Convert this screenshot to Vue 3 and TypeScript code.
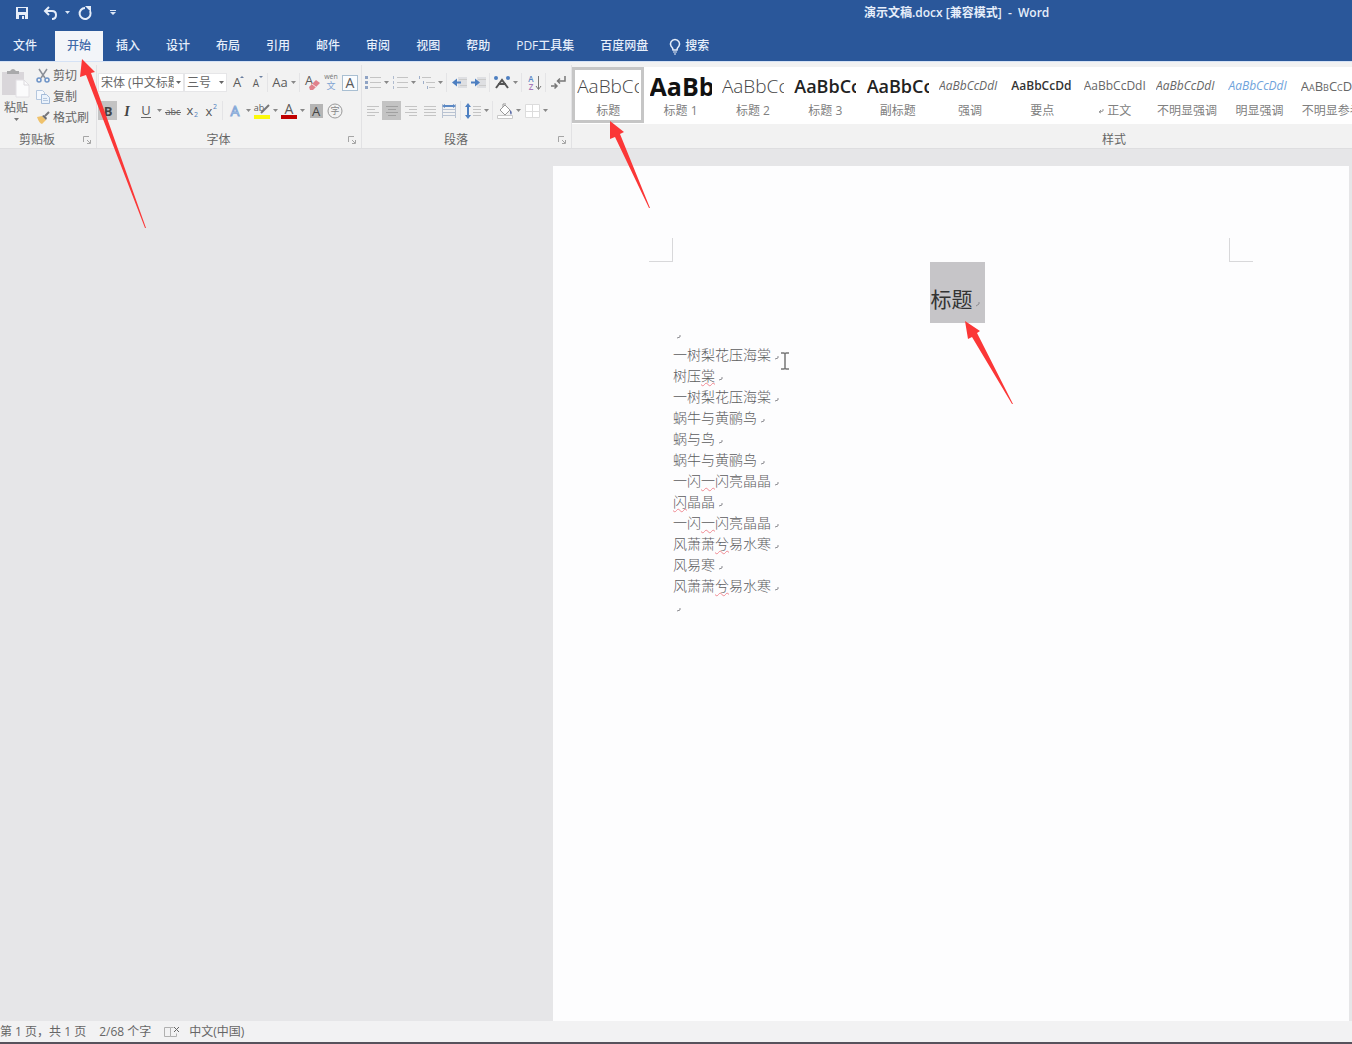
<script setup lang="ts">
interface Tool {
  kind: 'icon' | 'caret' | 'sep'
  label?: string
  art?: string
  on?: boolean
}

const icon = (label: string, art: string, on = false): Tool => ({ kind: 'icon', label, art, on })
const caret: Tool = { kind: 'caret' }
const sep: Tool = { kind: 'sep' }

const letter = (t: string, x: number, y: number, size: number, fill = '#5a5a5a', extra = '') =>
  `<text x="${x}" y="${y}" font-size="${size}" fill="${fill}" text-anchor="middle" ${extra}>${t}</text>`
const lines = (d: string, color = '#c4c4c4') => `<path d="${d}" stroke="${color}" fill="none"/>`

const tabs = ['插入', '设计', '布局', '引用', '邮件', '审阅', '视图', '帮助', 'PDF工具集', '百度网盘']

const fontTop: Tool[] = [
  icon('增大字号', letter('A', 9, 13, 13) + '<path d="M12 4l2-2 2 2z" fill="#6a7fa0"/>'),
  icon('减小字号', letter('A', 9, 13, 10) + '<path d="M12 2h4l-2 2z" fill="#6a7fa0"/>'),
  sep,
  icon('更改大小写', letter('Aa', 9, 13, 13)),
  caret,
  sep,
  icon('清除格式', letter('A', 6, 11, 13) + '<path d="M6 13l7-7 4 3-7 7h-3z" fill="#e0828c"/><path d="M9 10l4 3" stroke="#f6dfe1"/>'),
  icon('拼音指南', letter('wén', 9, 5, 7, '#777') + letter('文', 9, 15, 9, '#7fa3d3')),
  icon('字符边框', '<rect x="1.500" y="1.500" width="15" height="15" fill="#fafcfe" stroke="#a9bfd2"/>' + letter('A', 9, 14, 14)),
]

const fontBottom: Tool[] = [
  icon('加粗', letter('B', 9, 14, 13, '#444', 'font-weight="700"'), true),
  icon('倾斜', letter('I', 9, 14, 14, '#444', 'font-weight="700" font-style="italic" font-family="Liberation Serif, serif"')),
  icon('下划线', letter('U', 9, 13, 13) + lines('M4 15.500h10', '#666')),
  caret,
  icon('删除线', letter('abc', 9, 13, 9) + lines('M1 10.500h16', '#666')),
  icon('下标', letter('x', 7, 13, 13, '#555') + letter('2', 13, 15, 7, '#4f81bd')),
  icon('上标', letter('x', 7, 14, 13, '#555') + letter('2', 13, 7, 7, '#4f81bd')),
  sep,
  icon('文本效果', letter('A', 9, 14, 14, '#f4f8fd', 'stroke="#86a9d8" stroke-width="1"')),
  caret,
  icon('突出显示', letter('ab', 6, 9, 9) + '<path d="M8 11l8-8" stroke="#777" stroke-width="2"/><rect x="1" y="13" width="16" height="4" fill="#fbf90c"/>'),
  caret,
  icon('字体颜色', letter('A', 9, 12, 14) + '<rect x="1" y="13" width="16" height="4" fill="#c00000"/>'),
  caret,
  icon('字符底纹', '<rect x="3" y="2" width="13" height="14" fill="#b5b5b5"/>' + letter('A', 9, 14, 13, '#444')),
  icon('带圈字符', '<circle cx="9" cy="9" r="7" fill="none" stroke="#999"/>' + letter('字', 9, 12, 9, '#888')),
]

const paraTop: Tool[] = [
  icon('项目符号', lines('M6 3.500h11M6 8.500h11M6 13.500h11') + '<path d="M1 2h3v3h-3zM1 7h3v3h-3zM1 12h3v3h-3z" fill="#8fa3c4"/>'),
  caret,
  icon('编号', lines('M6 3.500h11M6 8.500h11M6 13.500h11') + lines('M2.500 2v3M2.500 7v3M2.500 12v3', '#b0bccf')),
  caret,
  icon('多级列表', lines('M4 3.500h9M8 8.500h9M11 13.500h6') + lines('M1.500 2v3M5.500 7v3M9.500 12v3', '#9fafc9')),
  caret,
  sep,
  icon('减少缩进', '<path d="M8 3h9v11h-9z" fill="#dedfe2"/>' + lines('M9 5.500h8M10 11.500h7', '#cbcbcb') + '<path d="M2 8.500l5-4v3h4v2h-4v3z" fill="#4d7fc1"/>'),
  icon('增加缩进', '<path d="M8 3h9v11h-9z" fill="#dedfe2"/>' + lines('M9 5.500h8M10 11.500h7', '#cbcbcb') + '<path d="M11 8.500l-5-4v3h-4v2h4v3z" fill="#4d7fc1"/>'),
  sep,
  icon('中文版式', '<path d="M3 14l6-8 6 8M5 10h8" stroke="#555" stroke-width="2" fill="none"/><circle cx="3" cy="4" r="2" fill="#4d7fc1"/><circle cx="15" cy="4" r="2" fill="#4d7fc1"/>'),
  caret,
  sep,
  icon('排序', letter('A', 6, 8, 8, '#5a86c4', 'font-weight="600"') + letter('Z', 6, 16, 8, '#a678b8', 'font-weight="600"') + '<path d="M13.500 2v13M11 12l2.500 3.500 2.500-3.500" stroke="#777" fill="none"/>'),
  sep,
  icon('显示编辑标记', '<path d="M16 2v5h-7M11 4.500l-2.500 2.500 2.500 2.500M2 12h6M5.500 9.500l2.500 2.500-2.500 2.500" stroke="#777" stroke-width="1.500" fill="none"/>'),
]

const paraBottom: Tool[] = [
  icon('左对齐', lines('M3 4.500h12M3 7.500h8M3 10.500h12M3 13.500h8')),
  icon('居中', lines('M3 4.500h12M5 7.500h8M3 10.500h12M5 13.500h8', '#a0a0a0'), true),
  icon('右对齐', lines('M3 4.500h12M7 7.500h8M3 10.500h12M7 13.500h8')),
  icon('两端对齐', lines('M3 4.500h12M3 7.500h12M3 10.500h12M3 13.500h12')),
  icon('分散对齐', lines('M3 7.500h12M3 10.500h12M3 13.500h12M2.500 2v14M15.500 2v14', '#b9c3d2') + '<path d="M2 4l3-2v1h8v-1l3 2-3 2v-1h-8v1z" fill="#5b88c4"/>'),
  sep,
  icon('行和段落间距', lines('M9 4.500h8M9 7.500h8M9 10.500h8M9 13.500h8') + '<path d="M4 1l3 4h-2v8h2l-3 4-3-4h2v-8h-2z" fill="#4d7fc1"/>'),
  caret,
  sep,
  icon('底纹', '<path d="M4 8l5-5 5 5-5 5zM7 5v-3h3" stroke="#999" fill="#fff"/><path d="M14 8q3 2 1 5l-1-2z" fill="#5d6ea8"/><path d="M1.500 13.500h15v3h-15z" fill="#fff" stroke="#c9c9c9"/>'),
  caret,
  icon('边框', '<path d="M2.500 2.500h14v13h-14zM9.500 2.500v13M2.500 9.500h14" fill="#fff" stroke="#dcdcdc"/>'),
  caret,
]

const styles = [
  { name: '标题', text: 'AaBbCc', look: 'large light', on: true },
  { name: '标题 1', text: 'AaBbC', look: 'huge' },
  { name: '标题 2', text: 'AaBbCc', look: 'large light' },
  { name: '标题 3', text: 'AaBbCc', look: 'large strong' },
  { name: '副标题', text: 'AaBbCc', look: 'large strong' },
  { name: '强调', text: 'AaBbCcDdI', look: 'slant' },
  { name: '要点', text: 'AaBbCcDd', look: 'strong' },
  { name: '正文', text: 'AaBbCcDdI', look: '', mark: true },
  { name: '不明显强调', text: 'AaBbCcDdI', look: 'slant' },
  { name: '明显强调', text: 'AaBbCcDdI', look: 'slant accent' },
  { name: '不明显参考', text: 'AaBbCcDdE', look: 'caps' },
]

/* Each line is split as [before, misspelt, after]. */
const body: [string, string, string][] = [
  ['', '', ''],
  ['一树梨花压海棠', '', ''],
  ['树压', '棠', ''],
  ['一树梨花压海棠', '', ''],
  ['蜗牛与黄鹂鸟', '', ''],
  ['蜗与鸟', '', ''],
  ['蜗牛与黄鹂鸟', '', ''],
  ['一闪', '一', '闪亮晶晶'],
  ['', '闪', '晶晶'],
  ['一闪', '一', '闪亮晶晶'],
  ['风萧萧', '兮', '易水寒'],
  ['风易寒', '', ''],
  ['风萧萧', '兮', '易水寒'],
  ['', '', ''],
]
</script>

<template>
  <div class="app">
    <header class="titlebar">
      <div class="quick">
        <button aria-label="保存">
          <svg width="14" height="14" viewBox="0 0 14 14"><path d="M1 1h12v12H1z" fill="#e6eefa" /><path d="M3 2h8v4H3z" fill="#2a579a" /><path d="M4 9h6v4H4z" fill="#2a579a" /><path d="M7 10h2v3H7z" fill="#e6eefa" /></svg>
        </button>
        <button aria-label="撤消">
          <svg width="16" height="16" viewBox="0 0 16 16"><path d="M6 2L2 6l4 4M2 6h7q4 0 4 4t-4 4" fill="none" stroke="#e6eefa" stroke-width="2" /></svg>
        </button>
        <button class="slim" aria-label="撤消列表">
          <svg width="5" height="3" viewBox="0 0 5 3"><path d="M0 0h5L2.500 3z" fill="#dbe6f6" /></svg>
        </button>
        <button class="redo" aria-label="重复">
          <svg width="16" height="16" viewBox="0 0 16 16"><path d="M8 3A5.500 5.500 0 1 0 13 6" fill="none" stroke="#e6eefa" stroke-width="2" /><path d="M8 1h6v6z" fill="#e6eefa" /></svg>
        </button>
        <button aria-label="自定义快速访问工具栏">
          <svg width="6" height="6" viewBox="0 0 6 6"><path d="M0 0h6v1H0zM0 2h6L3 5z" fill="#dbe6f6" /></svg>
        </button>
      </div>
      <h1>演示文稿.docx [兼容模式]&nbsp; - &nbsp;Word</h1>
    </header>

    <nav class="tabs">
      <button class="file">文件</button>
      <button class="active">开始</button>
      <button v-for="t in tabs" :key="t">{{ t }}</button>
      <button class="search">
        <svg width="12" height="17" viewBox="0 0 12 17"><path d="M4 12q0-2-2-4a4.500 4.500 0 1 1 8 0q-2 2-2 4z" fill="none" stroke="#e6eefa" stroke-width="1.500" /><path d="M4 14h4M5 16h2" stroke="#e6eefa" /></svg>
        搜索
      </button>
    </nav>

    <section class="ribbon">
      <div class="group clipboard">
        <div class="clip-tools">
          <button class="paste">
            <svg width="30" height="30" viewBox="0 0 30 30"><path d="M1 4h22v23H1z" fill="#d9d6da" /><path d="M6 6V3h3q3-4 6 0h3v3z" fill="#a9a9ab" /><path d="M15 12h8l5 5v12H15z" fill="#fbfbfc" stroke="#e2e0e4" /><path d="M23 12v5h5" fill="none" stroke="#dcdade" /></svg>
            <span>粘贴</span>
            <svg width="5" height="3" viewBox="0 0 5 3"><path d="M0 0h5L2.500 3z" fill="#777" /></svg>
          </button>
          <div class="clip-list">
            <button>
              <svg width="14" height="14" viewBox="0 0 14 14"><path d="M3 0l6 9M11 0L5 9" stroke="#8a8f98" stroke-width="1.500" /><circle cx="3" cy="11" r="2" fill="none" stroke="#6d93c7" stroke-width="1.500" /><circle cx="11" cy="11" r="2" fill="none" stroke="#6d93c7" stroke-width="1.500" /></svg>
              剪切
            </button>
            <button>
              <svg width="14" height="14" viewBox="0 0 14 14"><path d="M.5.5h6l2 2v7h-8z" fill="#f4f8fd" stroke="#b4c7de" /><path d="M5.500 4.500h5l3 3v6h-8z" fill="#eaf2fb" stroke="#a4bbd8" /><path d="M7 8.500h4M7 10.500h5" stroke="#b4c7de" /></svg>
              复制
            </button>
            <button>
              <svg width="14" height="14" viewBox="0 0 14 14"><path d="M1 6l5-1 4 4-4 4q-3-1-5-7z" fill="#efc26c" /><path d="M6 5l2-1 3 3-1 2z" fill="#6c6c70" /><path d="M9 5l4-4" stroke="#77777b" stroke-width="2" /></svg>
              格式刷
            </button>
          </div>
        </div>
        <footer>
          <span>剪贴板</span>
          <button class="launch" aria-label="剪贴板选项"><svg width="8" height="8" viewBox="0 0 8 8"><path d="M.5 6V.5H6M4 4l3 3M7.500 4v3.500H4" fill="none" stroke="#a5a5a5" /></svg></button>
        </footer>
      </div>

      <div class="group font">
        <div class="row">
          <label class="combo family">
            <select aria-label="字体"><option>宋体 (中文标题)</option></select>
            <svg width="5" height="3" viewBox="0 0 5 3"><path d="M0 0h5L2.500 3z" fill="#666" /></svg>
          </label>
          <label class="combo size">
            <select aria-label="字号"><option>三号</option></select>
            <svg width="5" height="3" viewBox="0 0 5 3"><path d="M0 0h5L2.500 3z" fill="#666" /></svg>
          </label>
          <template v-for="(t, i) in fontTop" :key="i">
            <i v-if="t.kind === 'sep'" class="sep"></i>
            <button v-else-if="t.kind === 'caret'" class="caret" aria-label="更多"><svg width="5" height="3" viewBox="0 0 5 3"><path d="M0 0h5L2.500 3z" fill="#888" /></svg></button>
            <button v-else class="tool" :class="{ on: t.on }" :aria-label="t.label"><svg width="18" height="18" viewBox="0 0 18 18" v-html="t.art"></svg></button>
          </template>
        </div>
        <div class="row">
          <template v-for="(t, i) in fontBottom" :key="i">
            <i v-if="t.kind === 'sep'" class="sep"></i>
            <button v-else-if="t.kind === 'caret'" class="caret" aria-label="更多"><svg width="5" height="3" viewBox="0 0 5 3"><path d="M0 0h5L2.500 3z" fill="#888" /></svg></button>
            <button v-else class="tool" :class="{ on: t.on }" :aria-label="t.label"><svg width="18" height="18" viewBox="0 0 18 18" v-html="t.art"></svg></button>
          </template>
        </div>
        <footer>
          <span>字体</span>
          <button class="launch" aria-label="字体选项"><svg width="8" height="8" viewBox="0 0 8 8"><path d="M.5 6V.5H6M4 4l3 3M7.500 4v3.500H4" fill="none" stroke="#a5a5a5" /></svg></button>
        </footer>
      </div>

      <div class="group para">
        <div v-for="(row, r) in [paraTop, paraBottom]" :key="r" class="row">
          <template v-for="(t, i) in row" :key="i">
            <i v-if="t.kind === 'sep'" class="sep"></i>
            <button v-else-if="t.kind === 'caret'" class="caret" aria-label="更多"><svg width="5" height="3" viewBox="0 0 5 3"><path d="M0 0h5L2.500 3z" fill="#888" /></svg></button>
            <button v-else class="tool" :class="{ on: t.on }" :aria-label="t.label"><svg width="18" height="18" viewBox="0 0 18 18" v-html="t.art"></svg></button>
          </template>
        </div>
        <footer>
          <span>段落</span>
          <button class="launch" aria-label="段落选项"><svg width="8" height="8" viewBox="0 0 8 8"><path d="M.5 6V.5H6M4 4l3 3M7.500 4v3.500H4" fill="none" stroke="#a5a5a5" /></svg></button>
        </footer>
      </div>

      <div class="group gallery">
        <div class="cards">
          <button v-for="s in styles" :key="s.name" class="card" :class="{ on: s.on }">
            <span class="sample" :class="s.look">{{ s.text }}</span>
            <span class="name"><svg v-if="s.mark" width="6" height="5" viewBox="0 0 6 5"><path d="M5 0v2L1 3M3 1L1 3l2 1" fill="none" stroke="#999" /></svg>{{ s.name }}</span>
          </button>
        </div>
        <footer><span>样式</span></footer>
      </div>
    </section>

    <main class="workspace">
      <article class="page">
        <div class="corners"><i class="left"></i><i class="right"></i></div>
        <h2>
          <span>标题<svg width="5" height="5" viewBox="0 0 5 5"><path d="M4 0v2L1 4" fill="none" stroke="#8d8d92" /></svg></span>
        </h2>
        <div class="text">
          <p v-for="(l, i) in body" :key="i">{{ l[0] }}<u v-if="l[1]">{{ l[1] }}</u>{{ l[2] }}<svg width="4" height="4" viewBox="0 0 4 4"><path d="M4 0v2L1 3" fill="none" stroke="#8d8d92" /></svg></p>
        </div>
      </article>
    </main>

    <footer class="status">
      <span>第 1 页，共 1 页</span>
      <span>2/68 个字</span>
      <svg width="16" height="12" viewBox="0 0 16 12"><path d="M.5 1.500h6v9h-6zM6.500 1.500h3M6.500 10.500h6v-3" fill="none" stroke="#b0b0b0" /><path d="M10 1l5 5M15 1l-5 5" stroke="#666" /></svg>
      <span>中文(中国)</span>
    </footer>

    <svg class="overlay" width="1100" height="420" viewBox="0 0 1100 420" aria-hidden="true">
      <g fill="#fb3737">
        <path d="M82 59L80 77L86 75L145 228H146L91 73L95 72Z" />
        <path d="M610 121V139L615 137L649 208H650L620 134L624 132Z" />
        <path d="M965 321L968 339L972 337L1012 404H1013L977 333L980 331Z" />
      </g>
      <path d="M781 353h3l1 1 1-1h3M785 354v14M781 369h3l1-1 1 1h3" fill="none" stroke="#777" stroke-width="1.500" />
    </svg>
  </div>
</template>

<style>
body {
  margin: 0;
}
</style>

<style scoped>
.app {
  position: relative;
  display: flex;
  flex-direction: column;
  min-height: 100vh;
  overflow: hidden;
  background: #e6e6e8;
  color: #666;
  font-family: "Open Sans", "Noto Sans CJK SC", sans-serif;
  font-size: 12px;
  line-height: 16px;
}
.app * {
  box-sizing: border-box;
}
button {
  display: flex;
  align-items: center;
  justify-content: center;
  flex: none;
  margin: 0;
  padding: 0;
  border: 0;
  background: none;
  color: inherit;
  font: inherit;
  white-space: nowrap;
}
svg {
  display: block;
  flex: none;
  overflow: visible;
}

.titlebar {
  display: flex;
  align-items: center;
  height: 25px;
  background: #2a579a;
  color: #e6eefa;
}
.quick {
  display: flex;
  flex: none;
  width: 120px;
  padding-left: 12px;
}
.quick button {
  width: 20px;
  height: 20px;
}
.quick button:nth-child(2) {
  margin-left: 9px;
}
.quick .slim {
  width: 12px;
}
.quick .redo {
  margin: 0 8px 0 2px;
}
h1 {
  margin: 0 0 0 744px;
  font-size: 12px;
  font-weight: 600;
  white-space: nowrap;
}

.tabs {
  display: flex;
  align-items: flex-end;
  height: 36px;
  background: #2a579a;
  color: #e6eefa;
  font-weight: 500;
}
.tabs button {
  height: 30px;
  padding: 0 13px;
}
.tabs .file {
  margin-right: 5px;
}
.tabs .active {
  padding: 0 12px;
  background: #f3f5f9;
  color: #3f69a8;
}
.tabs .search {
  gap: 4px;
  padding: 0 8px;
}

.ribbon {
  display: flex;
  height: 88px;
  border-top: 1px solid #d5e2f5;
  border-bottom: 1px solid #dedee0;
  background: #f2f2f2;
}
.group {
  display: flex;
  flex: none;
  flex-direction: column;
  gap: 9px;
  margin-top: 3px;
  padding-top: 8px;
  border-right: 1px solid #e2e2e4;
}
.group footer {
  display: flex;
  align-items: center;
  height: 16px;
  margin-top: auto;
  padding-right: 4px;
}
.group footer span {
  flex: 1;
  padding-right: 8px;
  text-align: center;
}
.launch {
  width: 10px;
  height: 10px;
}
.row {
  display: flex;
  height: 19px;
}
.tool {
  width: 19px;
  height: 19px;
}
.on.tool {
  background: #c3c3c3;
}
.caret {
  width: 8px;
}
.sep {
  width: 1px;
  height: 19px;
  margin: 0 2px;
  background: #e4e4e6;
}

.clipboard {
  gap: 0;
  width: 97px;
  padding-top: 0;
}
.clip-tools {
  display: flex;
}
.paste {
  flex-direction: column;
  gap: 2px;
  width: 32px;
  height: 58px;
}
.clip-list {
  display: flex;
  flex-direction: column;
  padding-left: 4px;
}
.clip-list button {
  justify-content: flex-start;
  gap: 3px;
  height: 21px;
}

.font {
  width: 265px;
  padding-left: 1px;
}
.combo {
  position: relative;
  flex: none;
  height: 19px;
  border: 1px solid #e6e6e8;
  background: #fff;
}
.family {
  width: 86px;
}
.size {
  width: 43px;
}
.combo select {
  width: 100%;
  height: 17px;
  padding: 0 9px 0 2px;
  border: 0;
  appearance: none;
  background: none;
  color: #666;
  font: inherit;
}
.combo svg {
  position: absolute;
  top: 7px;
  right: 2px;
}

.para {
  width: 210px;
  padding-left: 1px;
}

.gallery {
  flex: 1;
  gap: 0;
  min-width: 0;
  padding-top: 2px;
  border-right: 0;
  overflow: hidden;
}
.cards {
  display: grid;
  grid-template-columns: repeat(11, 1fr);
  width: calc(100% + 16px);
  height: 57px;
  flex: none;
  background: #fff;
}
.card {
  flex-direction: column;
  justify-content: flex-start;
  min-width: 0;
  height: 56px;
  border: 3px solid transparent;
}
.card.on {
  border-color: #c6c6c6;
}
.sample {
  width: 62px;
  height: 32px;
  overflow: hidden;
  color: #666;
  line-height: 32px;
  text-align: left;
}
.name {
  display: flex;
  align-items: center;
  gap: 3px;
  height: 18px;
  color: #808080;
}
.large {
  font-size: 19px;
}
.light {
  color: #444;
  font-weight: 300;
}
.strong {
  color: #333;
  font-weight: 600;
}
.large.strong {
  color: #222;
  font-size: 18px;
}
.huge {
  color: #111;
  font-size: 25px;
  font-weight: 700;
}
.slant {
  font-style: italic;
}
.accent {
  color: #6fa3dc;
}
.caps {
  font-size: 13px;
  font-variant: small-caps;
}
.gallery footer span {
  padding: 0 0 0 308px;
}

.workspace {
  display: flex;
  flex: 1;
  padding: 17px 3px 0 553px;
}
.page {
  flex: 1;
  padding-top: 72px;
  background: #fdfdfe;
}
.corners {
  display: flex;
  justify-content: space-between;
  height: 24px;
  margin: 0 96px;
}
.corners i {
  width: 24px;
  border-bottom: 1px solid #d8d8da;
}
.corners .left {
  border-right: 1px solid #d8d8da;
}
.corners .right {
  border-left: 1px solid #d8d8da;
}
h2 {
  display: flex;
  justify-content: center;
  margin: 0;
  padding-left: 12px;
  color: #333;
  font-size: 21px;
  font-weight: 400;
}
h2 span {
  display: flex;
  align-items: center;
  gap: 2px;
  height: 61px;
  padding: 13px 5px 0 1px;
  background: #c6c5c8;
}
h2 svg {
  margin-top: 10px;
}
.text {
  padding: 0 120px;
  color: #5c5c5e;
  font-size: 14px;
  font-weight: 300;
}
.text p {
  height: 21px;
  margin: 0;
  line-height: 21px;
}
.text svg {
  display: inline-block;
  margin-left: 3px;
}
.text u {
  text-decoration: underline wavy #f08a92 1px;
}

.status {
  display: flex;
  align-items: center;
  gap: 13px;
  height: 23px;
  border-bottom: 2px solid #57525c;
  background: #f2f2f3;
}
.status svg + span {
  margin-left: -4px;
}

.overlay {
  position: absolute;
  top: 0;
  left: 0;
  pointer-events: none;
}
</style>
